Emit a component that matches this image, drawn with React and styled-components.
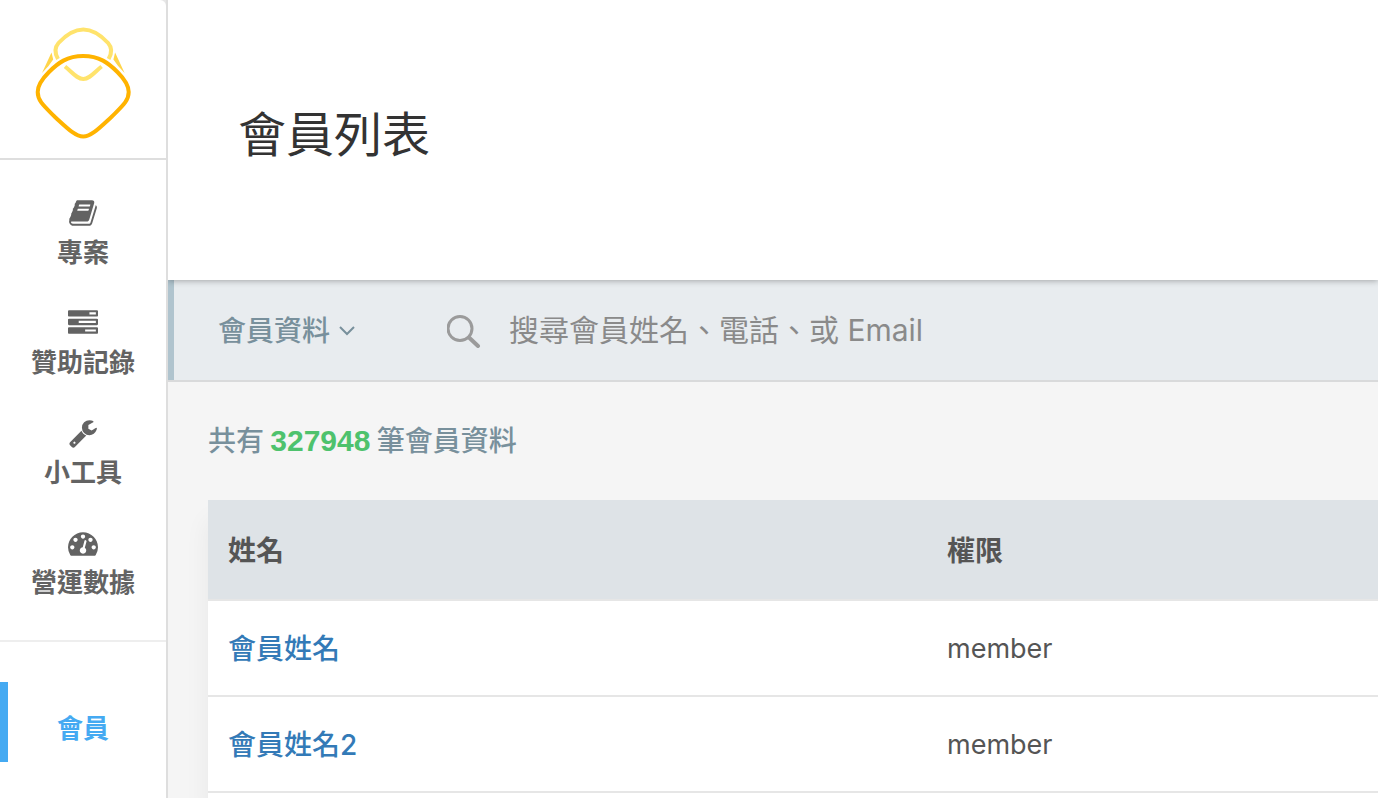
import React from 'react'
import styled, { createGlobalStyle } from 'styled-components'

const GlobalStyle = createGlobalStyle`

    * {
        box-sizing: border-box;
    }

    body {
        margin: 0;
        font-family: Inter, "Noto Sans CJK TC", sans-serif;
        font-size: 28px;
        color: #555555;
        background-color: #F5F5F5;
        overflow: hidden;
    }
`

const Page = styled.div`

    display: flex;
    min-height: 100vh;
`

const SideBar = styled.aside`

    position: relative;
    z-index: 1;
    flex: 0 0 168px;
    border-right: 2px solid #DEDEDE;
    background-color: #E6E6E6;
`

const SideInner = styled.div`

    height: 100%;
    background-color: #FFFFFF;
    border-top-right-radius: 6px;
`

const LogoLink = styled.a`

    display: block;
    height: 160px;
    border-bottom: 2px solid #DEDEDE;

    svg {
        display: block;
    }
`

const NavGroup = styled.nav`

    padding: 20px 0;
    border-bottom: 2px solid #EEEEEE;
`

const NavLink = styled.a`

    display: flex;
    flex-direction: column;
    align-items: center;
    gap: 6px;
    height: 110px;
    padding-top: 18px;
    font-size: 26px;
    font-weight: 700;
    line-height: 38px;
    color: #636363;
    text-decoration: none;

    svg {
        width: 30px;
        height: 30px;
        fill: currentColor;
    }
`

const MemberNav = styled.nav`

    padding: 40px 0;

    a {
        display: block;
        height: 80px;
        padding: 28px 8px 0 0;
        border-left: 8px solid #45AAF2;
        font-size: 26px;
        font-weight: 700;
        line-height: 38px;
        text-align: center;
        color: #45AAF2;
        text-decoration: none;
    }
`

const Main = styled.main`

    flex: 1;
    min-width: 0;
    display: flex;
    flex-direction: column;
`

const Header = styled.header`

    position: relative;
    display: flex;
    align-items: center;
    height: 280px;
    padding: 0 70px 10px;
    background-color: #FFFFFF;
    box-shadow: 0 1px 6px rgba(0, 0, 0, 0.3);

    h1 {
        margin: 0;
        font-size: 48px;
        font-weight: 400;
        line-height: 72px;
        color: #333333;
    }
`

const FilterBar = styled.form`

    display: flex;
    align-items: center;
    height: 102px;
    padding-left: 50px;
    background-color: #E8ECEF;
    border-bottom: 2px solid #D9DADB;
    box-shadow: inset 6px 0 #B0C4CE;
`

const FilterSelect = styled.label`

    display: flex;
    align-items: center;
    gap: 8px;
    margin-right: 92px;
    padding-top: 2px;
    color: #78909C;

    select {
        appearance: none;
        height: 60px;
        padding: 0;
        border: 0;
        background: none;
        font: inherit;
        font-weight: 500;
        color: inherit;
        outline: none;
    }
`

const Search = styled.label`

    flex: 1;
    display: flex;
    align-items: center;
    gap: 26px;
    color: #9B9B9B;

    input {
        flex: 1;
        min-width: 0;
        height: 60px;
        padding: 0;
        border: 0;
        background: none;
        font: inherit;
        font-size: 30px;
        color: #555555;
        outline: none;
    }

    input::placeholder {
        color: #8A8A8A;
        opacity: 1;
    }
`

const Content = styled.section`

    flex: 1;
    display: flex;
    flex-direction: column;
    padding-left: 40px;
`

const Total = styled.p`

    margin: 0;
    padding: 36px 0 40px;
    font-family: "Noto Sans CJK TC", sans-serif;
    font-weight: 500;
    line-height: 42px;
    color: #78909C;

    strong {
        font-family: "Liberation Sans", sans-serif;
        font-size: 30px;
        font-weight: 700;
        line-height: 30px;
        color: #4EC26D;
    }
`

const Card = styled.div`

    flex: 1;
    background-color: #FFFFFF;
    box-shadow: 0 20px 24px rgba(0, 0, 0, 0.06);
`

const Table = styled.table`

    width: 100%;
    border-collapse: collapse;
    table-layout: fixed;
    border-bottom: 2px solid #E6E6E6;

    th, td {
        height: 96px;
        padding: 0 20px;
        text-align: left;
        border-top: 2px solid #E6E6E6;
    }

    th {
        height: 100px;
        padding-bottom: 2px;
        border-top: 0;
        font-weight: 700;
        background-color: #DEE3E7;
    }

    th:first-child {
        width: 719px;
    }

    a {
        display: block;
        padding-bottom: 2px;
        font-weight: 500;
        color: #337AB7;
        text-decoration: none;
    }
`

const Role = styled.td`

    font-size: 27px;
`

const navItems = [
    {
        label: '專案',
        path: 'M1703 478q40 57 18 129l-275 906q-19 64-76.5 107.5t-122.5 43.5h-923q-77 0-148.5-53.5t-99.5-131.5q-24-67-2-127 0-4 3-27t4-37q1-8-3-21.5t-3-19.5q2-11 8-21t16.5-23.5 16.5-23.5q23-38 45-91.5t30-91.5q3-10 .5-30t-.5-28q3-11 17-28t17-23q21-36 42-92t25-90q1-9-2.5-32t.5-28q4-13 22-30.5t22-22.5q19-26 42.5-84.5t27.5-96.5q1-8-3-25.5t-2-26.5q2-8 9-18t18-23 17-21q8-12 16.5-30.5t15-35 16-36 19.5-32 26.5-23.5 36-11.5 47.5 5.5l-1 3q38-9 51-9h761q74 0 114 56t18 130l-274 906q-36 119-71.5 153.5t-128.5 34.5h-869q-27 0-38 15-11 16-1 43 24 70 144 70h923q29 0 56-15.5t35-41.5l300-987q7-22 5-57 38 15 59 43zm-1064 2q-4 13 2 22.5t20 9.5h608q13 0 25.5-9.5t16.5-22.5l21-64q4-13-2-22.5t-20-9.5h-608q-13 0-25.5 9.5t-16.5 22.5zm-83 256q-4 13 2 22.5t20 9.5h608q13 0 25.5-9.5t16.5-22.5l21-64q4-13-2-22.5t-20-9.5h-608q-13 0-25.5 9.5t-16.5 22.5z',
    },
    {
        label: '贊助記錄',
        path: 'M1024 1408h640v-128h-640v128zm-384-512h1024v-128h-1024v128zm640-512h384v-128h-384v128zm512 832v256q0 26-19 45t-45 19h-1664q-26 0-45-19t-19-45v-256q0-26 19-45t45-19h1664q26 0 45 19t19 45zm0-512v256q0 26-19 45t-45 19h-1664q-26 0-45-19t-19-45v-256q0-26 19-45t45-19h1664q26 0 45 19t19 45zm0-512v256q0 26-19 45t-45 19h-1664q-26 0-45-19t-19-45v-256q0-26 19-45t45-19h1664q26 0 45 19t19 45z',
    },
    {
        label: '小工具',
        path: 'M448 1472q0-26-19-45t-45-19-45 19-19 45 19 45 45 19 45-19 19-45zm644-420l-682 682q-37 37-90 37-52 0-91-37l-106-108q-38-36-38-90 0-53 38-91l681-681q39 98 114.5 173.5t173.5 114.5zm634-435q0 39-23 106-47 134-164.5 217.5t-258.5 83.5q-185 0-316.5-131.5t-131.5-316.5 131.5-316.5 316.5-131.5q58 0 121.5 16.5t107.5 46.5q16 11 16 28t-16 28l-293 169v224l193 107q5-3 79-48.5t135.5-81 70.5-35.5q15 0 23.5 10t8.5 25z',
    },
    {
        label: '營運數據',
        path: 'M384 1152q0-53-37.5-90.5t-90.5-37.5-90.5 37.5-37.5 90.5 37.5 90.5 90.5 37.5 90.5-37.5 37.5-90.5zm192-448q0-53-37.5-90.5t-90.5-37.5-90.5 37.5-37.5 90.5 37.5 90.5 90.5 37.5 90.5-37.5 37.5-90.5zm428 481l101-382q6-26-7.5-48.5t-38.5-29.5-48 6.5-30 39.5l-101 382q-60 5-107 43.5t-63 98.5q-20 77 20 146t117 89 146-20 89-117q16-60-6-117t-72-91zm660-33q0-53-37.5-90.5t-90.5-37.5-90.5 37.5-37.5 90.5 37.5 90.5 90.5 37.5 90.5-37.5 37.5-90.5zm-640-640q0-53-37.5-90.5t-90.5-37.5-90.5 37.5-37.5 90.5 37.5 90.5 90.5 37.5 90.5-37.5 37.5-90.5zm448 192q0-53-37.5-90.5t-90.5-37.5-90.5 37.5-37.5 90.5 37.5 90.5 90.5 37.5 90.5-37.5 37.5-90.5zm320 448q0 261-141 483-19 29-54 29h-1402q-35 0-54-29-141-221-141-483 0-182 71-348t191-286 286-191 348-71 348 71 286 191 191 286 71 348z',
    },
]

const members = [
    { name: '會員姓名', role: 'member' },
    { name: '會員姓名2', role: 'member' },
]

function Logo() {
    return (
        <svg width='166' height='158' viewBox='0 0 166 158' fill='none' strokeWidth='4'>
            <path stroke='#FFE36C' d='M58 59C54.500 53 55 47 58.500 43C65 36 74 29.500 83.300 29.500S101.600 36 108.100 43C111.600 47 112.100 53 108.600 59' />
            <path stroke='#FFE36C' d='M65 66.500C72 72 77 79 83.300 79S94.600 72 101.600 66.500' />
            <path fill='#FFD54A' d='M51.500 52.500L53.200 59.500L48.500 66L42 73ZM115.100 52.500L113.400 59.500L118.100 66L124.600 73Z' />
            <path stroke='#FFB300' d='M83.200 56C67 56 58 63 49 72C41 80 37.700 86 37.700 92C37.700 101 44 106 55 117C66 127 75 136.500 83.200 136.500S100.400 127 111.400 117C122.400 106 128.700 101 128.700 92C128.700 86 125.400 80 117.400 72C108.400 63 99.400 56 83.200 56Z' />
        </svg>
    )
}

export default function App() {
    return (
        <Page>
            <GlobalStyle />
            <SideBar>
                <SideInner>
                    <LogoLink href='#' aria-label='Home'><Logo /></LogoLink>
                    <NavGroup>
                        {navItems.map(item => (
                            <NavLink href='#' key={item.label}>
                                <svg viewBox='0 0 1792 1792'><path d={item.path} /></svg>
                                {item.label}
                            </NavLink>
                        ))}
                    </NavGroup>
                    <MemberNav>
                        <a href='#'>會員</a>
                    </MemberNav>
                </SideInner>
            </SideBar>
            <Main>
                <Header>
                    <h1>會員列表</h1>
                </Header>
                <FilterBar>
                    <FilterSelect>
                        <select aria-label='會員資料'>
                            <option>會員資料</option>
                        </select>
                        <svg width='16' height='10' viewBox='0 0 16 10' fill='none' stroke='currentColor' strokeWidth='2'>
                            <path d='M1 1L8 8L15 1' />
                        </svg>
                    </FilterSelect>
                    <Search>
                        <svg width='36' height='36' viewBox='0 0 36 36' fill='none' stroke='currentColor' strokeLinecap='round'>
                            <circle cx='13' cy='16.500' r='12' strokeWidth='3' />
                            <path d='M22 25.500L31 34' strokeWidth='4' />
                        </svg>
                        <input type='text' aria-label='搜尋' placeholder='搜尋會員姓名、電話、或 Email' />
                    </Search>
                </FilterBar>
                <Content>
                    <Total>共有 <strong>327948</strong> 筆會員資料</Total>
                    <Card>
                        <Table>
                            <thead>
                                <tr>
                                    <th>姓名</th>
                                    <th>權限</th>
                                </tr>
                            </thead>
                            <tbody>
                                {members.map(member => (
                                    <tr key={member.name}>
                                        <td><a href='#'>{member.name}</a></td>
                                        <Role>{member.role}</Role>
                                    </tr>
                                ))}
                            </tbody>
                        </Table>
                    </Card>
                </Content>
            </Main>
        </Page>
    )
}
